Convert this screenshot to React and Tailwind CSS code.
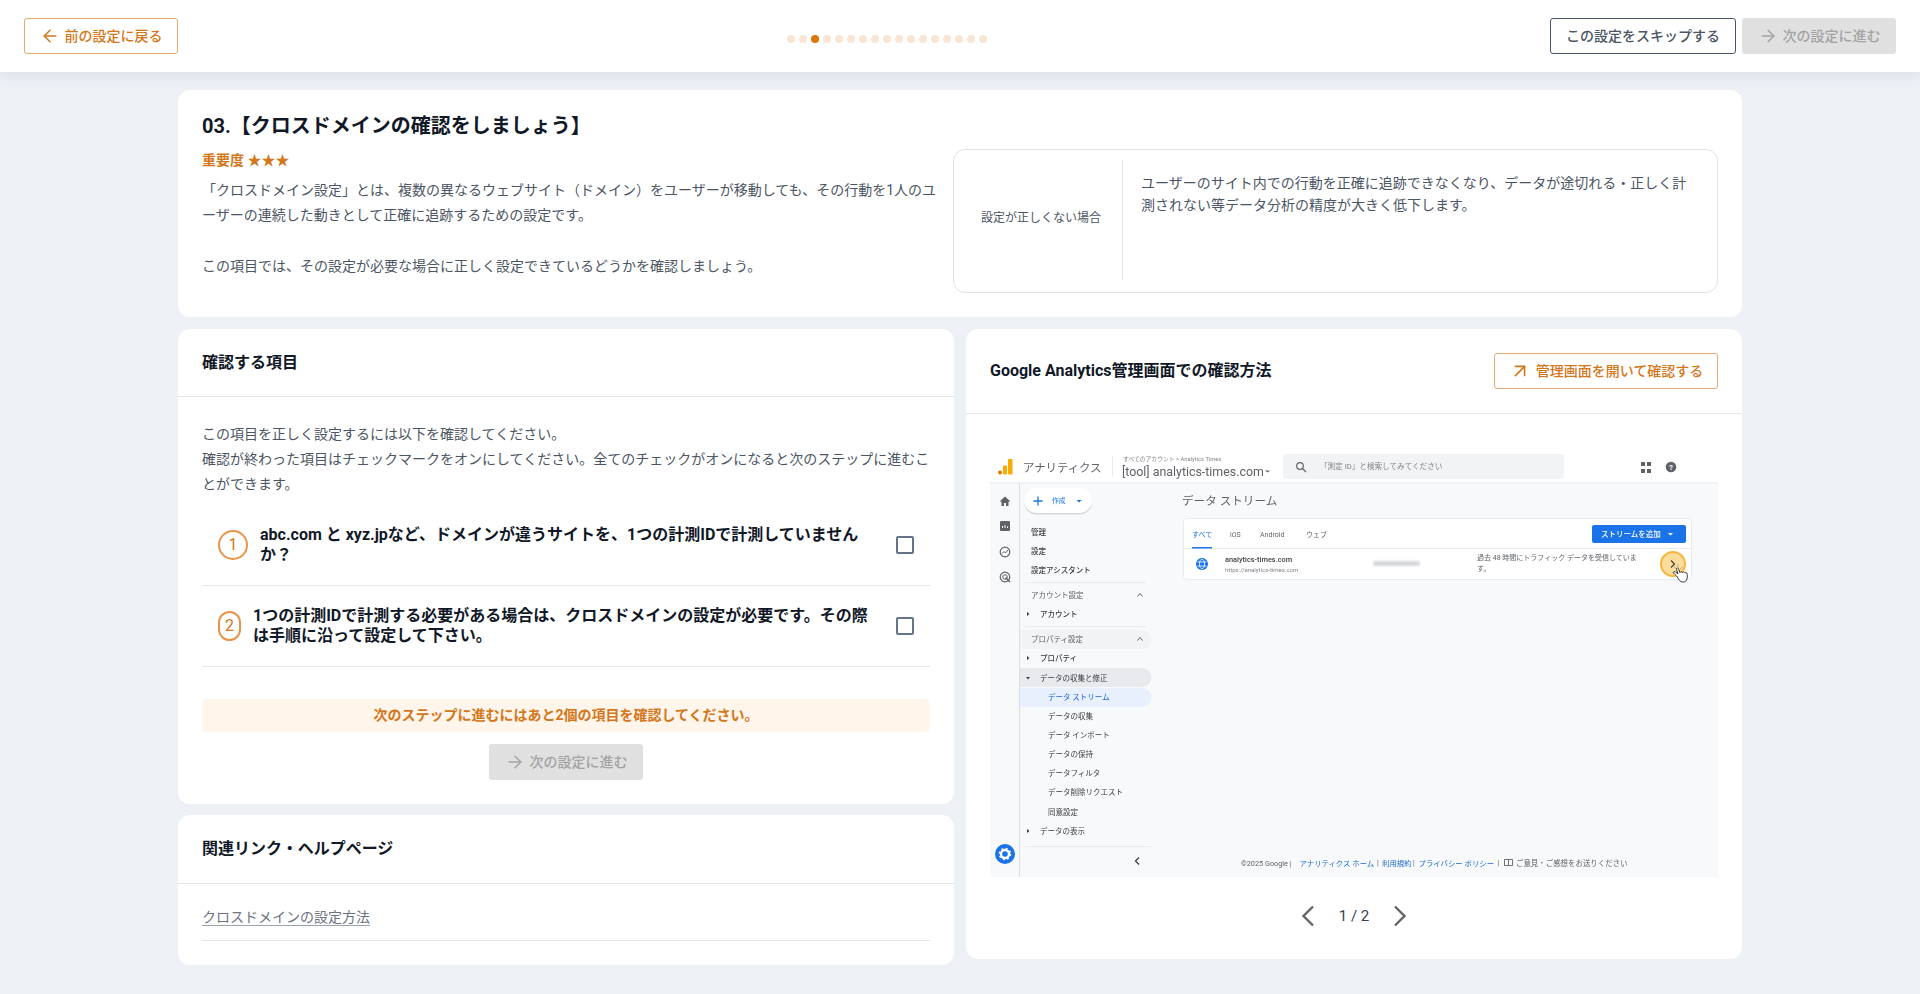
import React from "react";
import { ArrowLeft, ArrowRight, ArrowUpRight } from "lucide-react";

const JP = '"Roboto","Noto Sans CJK JP",sans-serif';

function T({ x, y, s = 7.5, c = "#3c4043", w = 400, a, children }) {
  return (
    <text x={x} y={y} fontSize={s} fill={c} fontWeight={w} textAnchor={a} dominantBaseline="central" fontFamily={JP}>
      {children}
    </text>
  );
}

function Tri({ x, y, dir = "right" }) {
  const d = dir === "right" ? `M${x - 1} ${y - 2}L${x + 1.5} ${y}L${x - 1} ${y + 2}Z` : `M${x - 2} ${y - 1}L${x + 2} ${y - 1}L${x} ${y + 1.5}Z`;
  return <path d={d} fill="#3c4043" />;
}

function Caret({ x, y }) {
  return <path d={`M${x - 2.5} ${y + 1.5}L${x} ${y - 1.5}L${x + 2.5} ${y + 1.5}`} fill="none" stroke="#5f6368" strokeWidth="1" />;
}

function AnalyticsShot() {
  const grey = "#5f6368";
  return (
    <svg viewBox="989 445 729 431" width="729" height="431" className="block blur-[0.35px]">
      <rect x="989" y="445" width="729" height="431" fill="#fff" />
      <rect x="990" y="482" width="728" height="394" fill="#f8f9fa" />
      <line x1="990" y1="482" x2="1718" y2="482" stroke="#e8eaed" />
      <line x1="1019.5" y1="482" x2="1019.5" y2="876" stroke="#dadce0" />

      {/* Top bar */}
      <rect x="998" y="469.5" width="4" height="4" rx="2" fill="#e37400" />
      <rect x="1003" y="464.5" width="4" height="9" rx="1" fill="#f9ab00" />
      <rect x="1008" y="458" width="4.5" height="15.5" rx="1" fill="#f9ab00" />
      <T x={1023} y={467} s={11.4} c={grey}>アナリティクス</T>
      <line x1="1112.5" y1="455" x2="1112.5" y2="475" stroke="#e8eaed" />
      <T x={1123} y={458} s={5.8} c="#80868b">すべてのアカウント &gt; Analytics Times</T>
      <T x={1122} y={470} s={12.4} c={grey}>[tool] analytics-times.com</T>
      <path d="M1265 469.5h5l-2.5 2z" fill={grey} />
      <rect x="1283" y="453" width="281" height="25" rx="3" fill="#f1f3f4" />
      <circle cx="1300" cy="465" r="3.3" fill="none" stroke={grey} strokeWidth="1.2" />
      <line x1="1302.5" y1="467.5" x2="1306" y2="471" stroke={grey} strokeWidth="1.3" />
      <T x={1320} y={465} s={7.6} c="#80868b">「測定 ID」と検索してみてください</T>
      <rect x="1641" y="461" width="4" height="4" fill={grey} />
      <rect x="1647" y="461" width="4" height="4" fill={grey} />
      <rect x="1641" y="468" width="4" height="4" fill={grey} />
      <rect x="1647" y="468" width="4" height="4" fill={grey} />
      <circle cx="1671" cy="466" r="5.3" fill={grey} />
      <T x={1671} y={466} s={7.5} c="#fff" w={700} a="middle">?</T>

      {/* Rail */}
      <path d="M1001.5 505v-4.500h-2l5.500-5 5.500 5h-2v4.500h-2.500v-3h-2v3z" fill={grey} />
      <rect x="1000" y="520" width="10" height="10" rx="1" fill={grey} />
      <path d="M1002.500 527v-2M1005 527v-3M1007.500 527v-1.500" stroke="#fff" strokeWidth="1" />
      <circle cx="1005" cy="551" r="4.800" fill="none" stroke={grey} strokeWidth="1.2" />
      <path d="M1002 552.500l2-2 1.500 1.500 2.500-3" fill="none" stroke={grey} strokeWidth="1" />
      <circle cx="1005" cy="576" r="4.800" fill="none" stroke={grey} strokeWidth="1.2" />
      <circle cx="1005" cy="576" r="2.300" fill="none" stroke={grey} strokeWidth="1" />
      <path d="M1005.500 576.500l4.500 4.500" stroke={grey} strokeWidth="1.500" />
      <circle cx="1005" cy="853" r="10" fill="#1a73e8" />
      <circle cx="1005" cy="853" r="4" fill="none" stroke="#fff" strokeWidth="2.400" />
      <circle cx="1005" cy="853" r="5.600" fill="none" stroke="#fff" strokeWidth="1.400" strokeDasharray="2 2.400" />

      {/* Sidebar */}
      <rect x="1024" y="488.500" width="68" height="25" rx="12.500" fill="#000" opacity="0.14" />
      <rect x="1024" y="487" width="68" height="25" rx="12.500" fill="#fff" />
      <path d="M1038 495.500v9M1033.500 500h9" stroke="#1a73e8" strokeWidth="1.300" />
      <T x={1052} y={500} s={6.800} c="#1a73e8">作成</T>
      <path d="M1076.500 499h5l-2.500 2.500z" fill="#1a73e8" />
      <T x={1031} y={531} w={500}>管理</T>
      <T x={1031} y={550} w={500}>設定</T>
      <T x={1031} y={569} w={500}>設定アシスタント</T>
      <line x1="1025" y1="581.500" x2="1146" y2="581.500" stroke="#e8eaed" />
      <T x={1031} y={594} c={grey}>アカウント設定</T>
      <Caret x={1140} y={594} />
      <Tri x={1028} y={613} />
      <T x={1040} y={613} w={500}>アカウント</T>
      <line x1="1025" y1="625.500" x2="1146" y2="625.500" stroke="#e8eaed" />
      <path d="M1020 629h122a9.500 9.500 0 0 1 0 19h-122z" fill="#f1f3f4" />
      <T x={1031} y={638} c={grey}>プロパティ設定</T>
      <Caret x={1140} y={638} />
      <Tri x={1028} y={657} />
      <T x={1040} y={657} w={500}>プロパティ</T>
      <path d="M1020 667h122a9.500 9.500 0 0 1 0 19h-122z" fill="#e8eaed" />
      <Tri x={1028} y={677} dir="down" />
      <T x={1040} y={677}>データの収集と修正</T>
      <path d="M1020 687h122a9.500 9.500 0 0 1 0 19h-122z" fill="#e8f0fe" />
      <T x={1048} y={696} c="#1967d2">データ ストリーム</T>
      <T x={1048} y={715}>データの収集</T>
      <T x={1048} y={734}>データ インポート</T>
      <T x={1048} y={753}>データの保持</T>
      <T x={1048} y={772}>データフィルタ</T>
      <T x={1048} y={791}>データ削除リクエスト</T>
      <T x={1048} y={811}>同意設定</T>
      <Tri x={1028} y={830} />
      <T x={1040} y={830}>データの表示</T>
      <line x1="1025" y1="845.500" x2="1151" y2="845.500" stroke="#e8eaed" />
      <path d="M1139 856.500l-3.500 3.500 3.500 3.500" fill="none" stroke="#3c4043" strokeWidth="1.300" />

      {/* Content */}
      <T x={1182} y={500} s={11.600} c={grey}>データ ストリーム</T>
      <rect x="1183.500" y="517.500" width="508" height="61" rx="3" fill="#fff" stroke="#e8eaed" />
      <line x1="1184" y1="547.500" x2="1691" y2="547.500" stroke="#e8eaed" />
      <T x={1192} y={534} s={7} c="#1a73e8">すべて</T>
      <rect x="1192" y="546" width="20" height="1.500" fill="#1a73e8" />
      <T x={1230} y={534} s={7} c={grey}>iOS</T>
      <T x={1260} y={534} s={7} c={grey}>Android</T>
      <T x={1306} y={534} s={7} c={grey}>ウェブ</T>
      <circle cx="1202" cy="563" r="6" fill="#1a73e8" />
      <ellipse cx="1202" cy="563" rx="2.500" ry="4.500" fill="none" stroke="#fff" strokeWidth="0.800" />
      <path d="M1197.500 561h9M1197.500 565h9" stroke="#fff" strokeWidth="0.800" />
      <T x={1225} y={558} s={7.400} w={500}>analytics-times.com</T>
      <T x={1225} y={568} s={6} c="#80868b">https://analytics-times.com</T>
      <rect x="1373" y="560" width="47" height="5" rx="2" fill="#d5d7da" className="blur-[1px]" />
      <T x={1477} y={557} s={7} c={grey}>過去 48 時間にトラフィック データを受信していま</T>
      <T x={1477} y={568} s={7} c={grey}>す。</T>
      <rect x="1592" y="524" width="94" height="18" rx="2" fill="#1a73e8" />
      <T x={1601} y={533} s={7.500} c="#fff" w={500}>ストリームを追加</T>
      <path d="M1668 532h5l-2.500 2.500z" fill="#fff" />
      <circle cx="1673" cy="563" r="12" fill="#fcdc9c" stroke="#f6b73c" strokeWidth="2" />
      <path d="M1671 559.500l3.500 3.500-3.500 3.500" fill="none" stroke="#3c4043" strokeWidth="1.200" />
      <path d="M1677 568l-3-2M1678 566.500v-3.500M1680 568l2.500-2" stroke="#9aa0a6" strokeWidth="0.800" />
      <path d="M1683 581c-3 0-4-2-6-5.500-1-1.500-4.500-3.500-3.500-4.500 1-1 3 .500 4.500 2l-1.500-4.500c-.500-1.500 1.500-2 2-.500l1.500 3.500c.500-1 2-1 2.500 0 .500-.8 2-.8 2.500.200 .500-.5 1.800-.3 2 .8 .500 2.500.500 5-.500 6.500-.8 1.500-1.500 2-3 2z" fill="#fff" stroke="#202124" strokeWidth="0.900" />

      {/* Footer */}
      <T x={1241} y={862} s={7.300} c={grey}>©2025 Google |</T>
      <T x={1299.500} y={862} s={7.400} c="#1967d2">アナリティクス ホーム</T>
      <T x={1377} y={862} s={7} c={grey}>|</T>
      <T x={1382} y={862} s={7.400} c="#1967d2">利用規約</T>
      <T x={1413} y={862} s={7} c={grey}>|</T>
      <T x={1418.500} y={862} s={7.400} c="#1967d2">プライバシー ポリシー</T>
      <T x={1497.500} y={862} s={7} c={grey}>|</T>
      <path d="M1504.500 858.500h8v6h-8zM1508.500 858.500v6" fill="none" stroke={grey} strokeWidth="0.900" />
      <T x={1516} y={862} s={7.450} c={grey}>ご意見・ご感想をお送りください</T>
    </svg>
  );
}

function OrangeBtn({ icon, children, className }) {
  return (
    <button className={"flex h-[36px] items-center gap-[5px] rounded-[3px] border border-[#e3a873] bg-white text-sm font-medium text-[#d4761a] " + className}>
      {icon}
      {children}
    </button>
  );
}

function NextBtn() {
  return (
    <button className="flex h-[36px] w-[154px] items-center justify-center gap-[5px] rounded-[3px] bg-[#e0e0e0] text-sm font-medium text-[#a3a3a3]">
      <ArrowRight size={20} strokeWidth={1.75} />
      次の設定に進む
    </button>
  );
}

function CheckItem({ n, circle, children }) {
  return (
    <div className="flex h-[81px] items-center border-b border-[#e5e7eb] pl-[16px] pr-[16px]">
      <span className={"flex h-[30px] shrink-0 items-center justify-center rounded-full border-2 border-[#e8954a] text-base text-[#d4761a] " + circle}>{n}</span>
      <p className="ml-[12px] flex-1 text-base font-bold leading-[20px] text-[#111827]">{children}</p>
      <span className="ml-[24px] h-[18px] w-[18px] shrink-0 rounded-[2px] border-2 border-[#64748b]" />
    </div>
  );
}

export default function App() {
  return (
    <div className="min-h-screen bg-[#edf1f6] font-['Roboto','Noto_Sans_CJK_JP',sans-serif] text-[#4b5563]">
      <header className="flex h-[72px] items-center justify-between bg-white px-[24px] shadow-[0_4px_12px_rgba(100,116,139,0.12)]">
        <OrangeBtn className="w-[154px] justify-center" icon={<ArrowLeft size={20} strokeWidth={1.75} />}>
          前の設定に戻る
        </OrangeBtn>
        <div className="ml-[46px] mt-[6px] flex gap-[4px]">
          {Array.from({ length: 17 }, (_, i) => (
            <span key={i} className={i === 2 ? "h-[8px] w-[8px] rounded-full bg-[#d97706]" : "h-[8px] w-[8px] rounded-full bg-[#f9e5d4]"} />
          ))}
        </div>
        <div className="flex gap-[6px]">
          <button className="h-[36px] w-[186px] rounded-[3px] border border-[#475569] bg-white text-sm font-medium text-[#4b5563]">この設定をスキップする</button>
          <NextBtn />
        </div>
      </header>

      <main className="flex flex-col gap-[12px] px-[178px] pt-[18px]">
        <section className="flex h-[227px] rounded-[12px] bg-white px-[24px] pb-[24px] pt-[25px]">
          <div className="w-[751px] shrink-0">
            <h1 className="text-xl font-bold leading-[22px] text-[#111827]">03.【クロスドメインの確認をしましょう】</h1>
            <p className="mt-[13px] text-sm font-bold leading-[20px] text-[#d4761a]">重要度 ★★★</p>
            <p className="mt-[8px] w-[740px] text-sm leading-[25.2px]">
              「クロスドメイン設定」とは、複数の異なるウェブサイト（ドメイン）をユーザーが移動しても、その行動を1人のユーザーの連続した動きとして正確に追跡するための設定です。
              <br />
              <br />
              この項目では、その設定が必要な場合に正しく設定できているどうかを確認しましょう。
            </p>
          </div>
          <div className="mt-[34px] flex h-[144px] w-[765px] items-stretch rounded-[12px] border border-[#dfe2e6] pb-[12px] pl-[0px] pr-[24px] pt-[10px]">
            <div className="flex w-[169px] shrink-0 items-center justify-center border-r border-[#e5e7eb] pb-[4px] pl-[6px] text-xs">設定が正しくない場合</div>
            <p className="ml-[18px] pt-[13px] text-sm leading-[21.6px]">ユーザーのサイト内での行動を正確に追跡できなくなり、データが途切れる・正しく計測されない等データ分析の精度が大きく低下します。</p>
          </div>
        </section>

        <div className="grid grid-cols-2 items-start gap-x-[12px]">
          <div className="flex flex-col gap-[11px]">
            <section className="rounded-[12px] bg-white">
              <h2 className="flex h-[68px] items-center border-b border-[#e5e7eb] px-[24px] text-base font-bold text-[#111827]">確認する項目</h2>
              <div className="px-[24px] pb-[24px] pt-[25px]">
                <p className="text-sm leading-[25.2px]">
                  この項目を正しく設定するには以下を確認してください。
                  <br />
                  確認が終わった項目はチェックマークをオンにしてください。全てのチェックがオンになると次のステップに進むことができます。
                </p>
                <div className="mt-[7px]">
                  <CheckItem n="1" circle="w-[30px]">abc.com と xyz.jpなど、ドメインが違うサイトを、1つの計測IDで計測していませんか？</CheckItem>
                  <CheckItem n="2" circle="w-[23px]">1つの計測IDで計測する必要がある場合は、クロスドメインの設定が必要です。その際は手順に沿って設定して下さい。</CheckItem>
                </div>
                <div className="mt-[32px] flex h-[33px] items-center justify-center rounded-[4px] bg-[#fff5eb] text-sm font-bold text-[#d4761a]">次のステップに進むにはあと2個の項目を確認してください。</div>
                <div className="mt-[12px] flex justify-center">
                  <NextBtn />
                </div>
              </div>
            </section>
            <section className="h-[150px] rounded-[12px] bg-white">
              <h2 className="flex h-[69px] items-center border-b border-[#e5e7eb] px-[24px] pt-[1px] text-base font-bold text-[#111827]">関連リンク・ヘルプページ</h2>
              <div className="px-[24px] pt-[21px]">
                <div className="border-b border-[#e5e7eb] pb-[11px]">
                  <a className="text-sm text-[#6b7280] underline decoration-[#9ca3af] underline-offset-[3px]">クロスドメインの設定方法</a>
                </div>
              </div>
            </section>
          </div>

          <section className="h-[630px] rounded-[12px] bg-white">
            <div className="flex h-[85px] items-center justify-between border-b border-[#e5e7eb] pl-[24px] pr-[24px]">
              <h2 className="text-base font-bold text-[#111827]">Google Analytics管理画面での確認方法</h2>
              <OrangeBtn className="w-[224px] justify-center" icon={<ArrowUpRight size={22} strokeWidth={1.75} />}>
                管理画面を開いて確認する
              </OrangeBtn>
            </div>
            <div className="px-[23px] pt-[32px]">
              <AnalyticsShot />
            </div>
            <div className="mt-[28px] flex items-center justify-center gap-[24px]">
              <svg width="14" height="22" viewBox="0 0 14 22" fill="none" stroke="#666" strokeWidth="2.4"><path d="M12 1.500L2.500 11l9.500 9.500" /></svg>
              <span className="text-[15px] text-[#374151]">1 / 2</span>
              <svg width="14" height="22" viewBox="0 0 14 22" fill="none" stroke="#666" strokeWidth="2.4"><path d="M2 1.500L11.500 11 2 20.500" /></svg>
            </div>
          </section>
        </div>
      </main>
    </div>
  );
}
